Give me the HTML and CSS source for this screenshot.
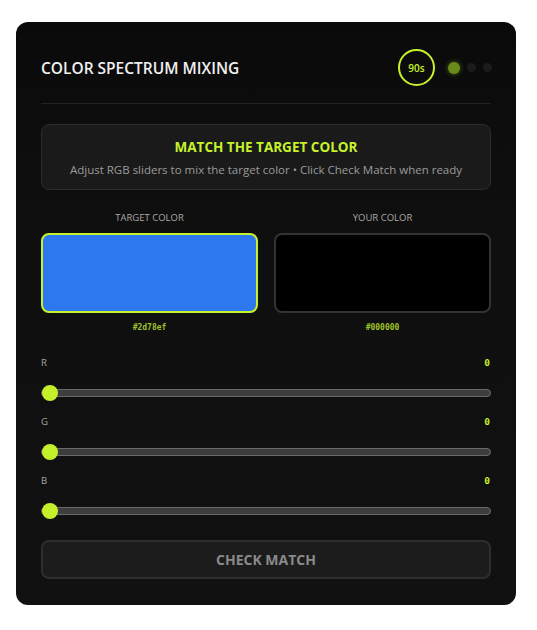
FILE: index.html
```html
<!DOCTYPE html>
<html>
<head>
<meta charset="utf-8">
<link rel="stylesheet" href="styles.css">
</head>
<body>
<div class="card">
  <div class="header">
    <h1 class="title">COLOR SPECTRUM MIXING</h1>
    <div class="status">
      <div class="timer">90s</div>
      <div class="dots">
        <span class="dot active"></span>
        <span class="dot"></span>
        <span class="dot"></span>
      </div>
    </div>
  </div>

  <div class="instructions">
    <div class="instr-title">MATCH THE TARGET COLOR</div>
    <div class="instr-text">Adjust RGB sliders to mix the target color • Click Check Match when ready</div>
  </div>

  <div class="swatches">
    <div class="swatch-col">
      <div class="swatch-label">TARGET COLOR</div>
      <div class="swatch target"></div>
      <div class="hex">#2d78ef</div>
    </div>
    <div class="swatch-col">
      <div class="swatch-label">YOUR COLOR</div>
      <div class="swatch yours"></div>
      <div class="hex">#000000</div>
    </div>
  </div>

  <div class="sliders">
    <div class="slider-group">
      <div class="slider-head"><span class="ch">R</span><span class="val">0</span></div>
      <input class="range" type="range" min="0" max="255" value="0">
    </div>
    <div class="slider-group">
      <div class="slider-head"><span class="ch">G</span><span class="val">0</span></div>
      <input class="range" type="range" min="0" max="255" value="0">
    </div>
    <div class="slider-group">
      <div class="slider-head"><span class="ch">B</span><span class="val">0</span></div>
      <input class="range" type="range" min="0" max="255" value="0">
    </div>
  </div>

  <button class="check">CHECK MATCH</button>
</div>
</body>
</html>
```

FILE: styles.css
```css
* { box-sizing: border-box; }

body {
  margin: 0;
  background: #ffffff;
  font-family: "Open Sans", "Noto Sans", sans-serif;
}

.card {
  width: 500px;
  margin: 22px 0 0 16px;
  background: linear-gradient(180deg, #0a0a0a 0%, #0f0f0f 35%, #111111 100%);
  border-radius: 12px;
  padding: 27px 25px 26px;
}

.header {
  display: flex;
  align-items: center;
  justify-content: space-between;
  padding-bottom: 17px;
  border-bottom: 1px solid #222222;
}

.title {
  margin: 0;
  font-size: 15.5px;
  font-weight: 600;
  color: #f0f0f0;
  letter-spacing: 0;
}

.status {
  display: flex;
  align-items: center;
  gap: 13px;
  margin-right: -1px;
}

.timer {
  width: 37px;
  height: 37px;
  border: 2px solid #c6f22c;
  border-radius: 50%;
  display: flex;
  align-items: center;
  justify-content: center;
  color: #c6f22c;
  font-size: 10px;
  font-weight: 600;
}

.dots {
  display: flex;
  align-items: center;
  gap: 7px;
}

.dot {
  width: 9px;
  height: 9px;
  border-radius: 50%;
  background: #1b1b1b;
}

.dot.active {
  width: 12px;
  height: 12px;
  background: #6b8a1c;
  box-shadow: 0 0 5px rgba(150, 200, 30, 0.5);
}

.instructions {
  margin-top: 20px;
  background: #1a1a1a;
  border: 1px solid #2c2c2c;
  border-radius: 8px;
  padding: 13px 10px 11px;
  text-align: center;
}

.instr-title {
  color: #c6f22c;
  font-size: 13.5px;
  font-weight: 700;
  line-height: 19px;
}

.instr-text {
  margin-top: 4px;
  color: #9a9a9a;
  font-size: 11.5px;
  line-height: 17px;
}

.swatches {
  display: grid;
  grid-template-columns: 1fr 1fr;
  gap: 16px;
  margin-top: 21px;
}

.swatch-col {
  display: flex;
  flex-direction: column;
  align-items: stretch;
}

.swatch-label {
  text-align: center;
  color: #a8a8a8;
  font-size: 9.5px;
  line-height: 14px;
  margin-bottom: 8px;
}

.swatch {
  height: 80px;
  border-radius: 8px;
  border: 2px solid #333333;
}

.swatch.target {
  background: #2d78ef;
  border-color: #c6f22c;
}

.swatch.yours {
  background: #000000;
}

.hex {
  text-align: center;
  margin-top: 9px;
  font-family: "DejaVu Sans Mono", monospace;
  font-size: 8px;
  font-weight: 700;
  color: #9fc22a;
  line-height: 12px;
}

.sliders {
  margin-top: 22px;
  display: flex;
  flex-direction: column;
  gap: 13px;
}

.slider-head {
  display: flex;
  justify-content: space-between;
  line-height: 14px;
  padding-right: 1px;
}

.ch {
  color: #a8a8a8;
  font-size: 9.5px;
}

.val {
  color: #c6f22c;
  font-size: 9.5px;
  font-weight: 700;
  font-family: "DejaVu Sans Mono", monospace;
}

.range {
  -webkit-appearance: none;
  appearance: none;
  display: block;
  width: 450px;
  height: 18px;
  margin: 14px 0 0;
  background: transparent;
}

.range::-webkit-slider-runnable-track {
  height: 8px;
  background: #3d3d3d;
  border: 1px solid #6a6a6a;
  border-radius: 5px;
}

.range::-webkit-slider-thumb {
  -webkit-appearance: none;
  appearance: none;
  width: 16px;
  height: 16px;
  margin-top: -5px;
  border-radius: 50%;
  background: #c4f02a;
  border: none;
}

.check {
  display: block;
  width: 100%;
  height: 39px;
  margin-top: 20px;
  background: #1c1c1c;
  border: 2px solid #2e2e2e;
  border-radius: 8px;
  color: #8a8a8a;
  font-family: "Open Sans", "Noto Sans", sans-serif;
  font-size: 14px;
  font-weight: 700;
}
```
